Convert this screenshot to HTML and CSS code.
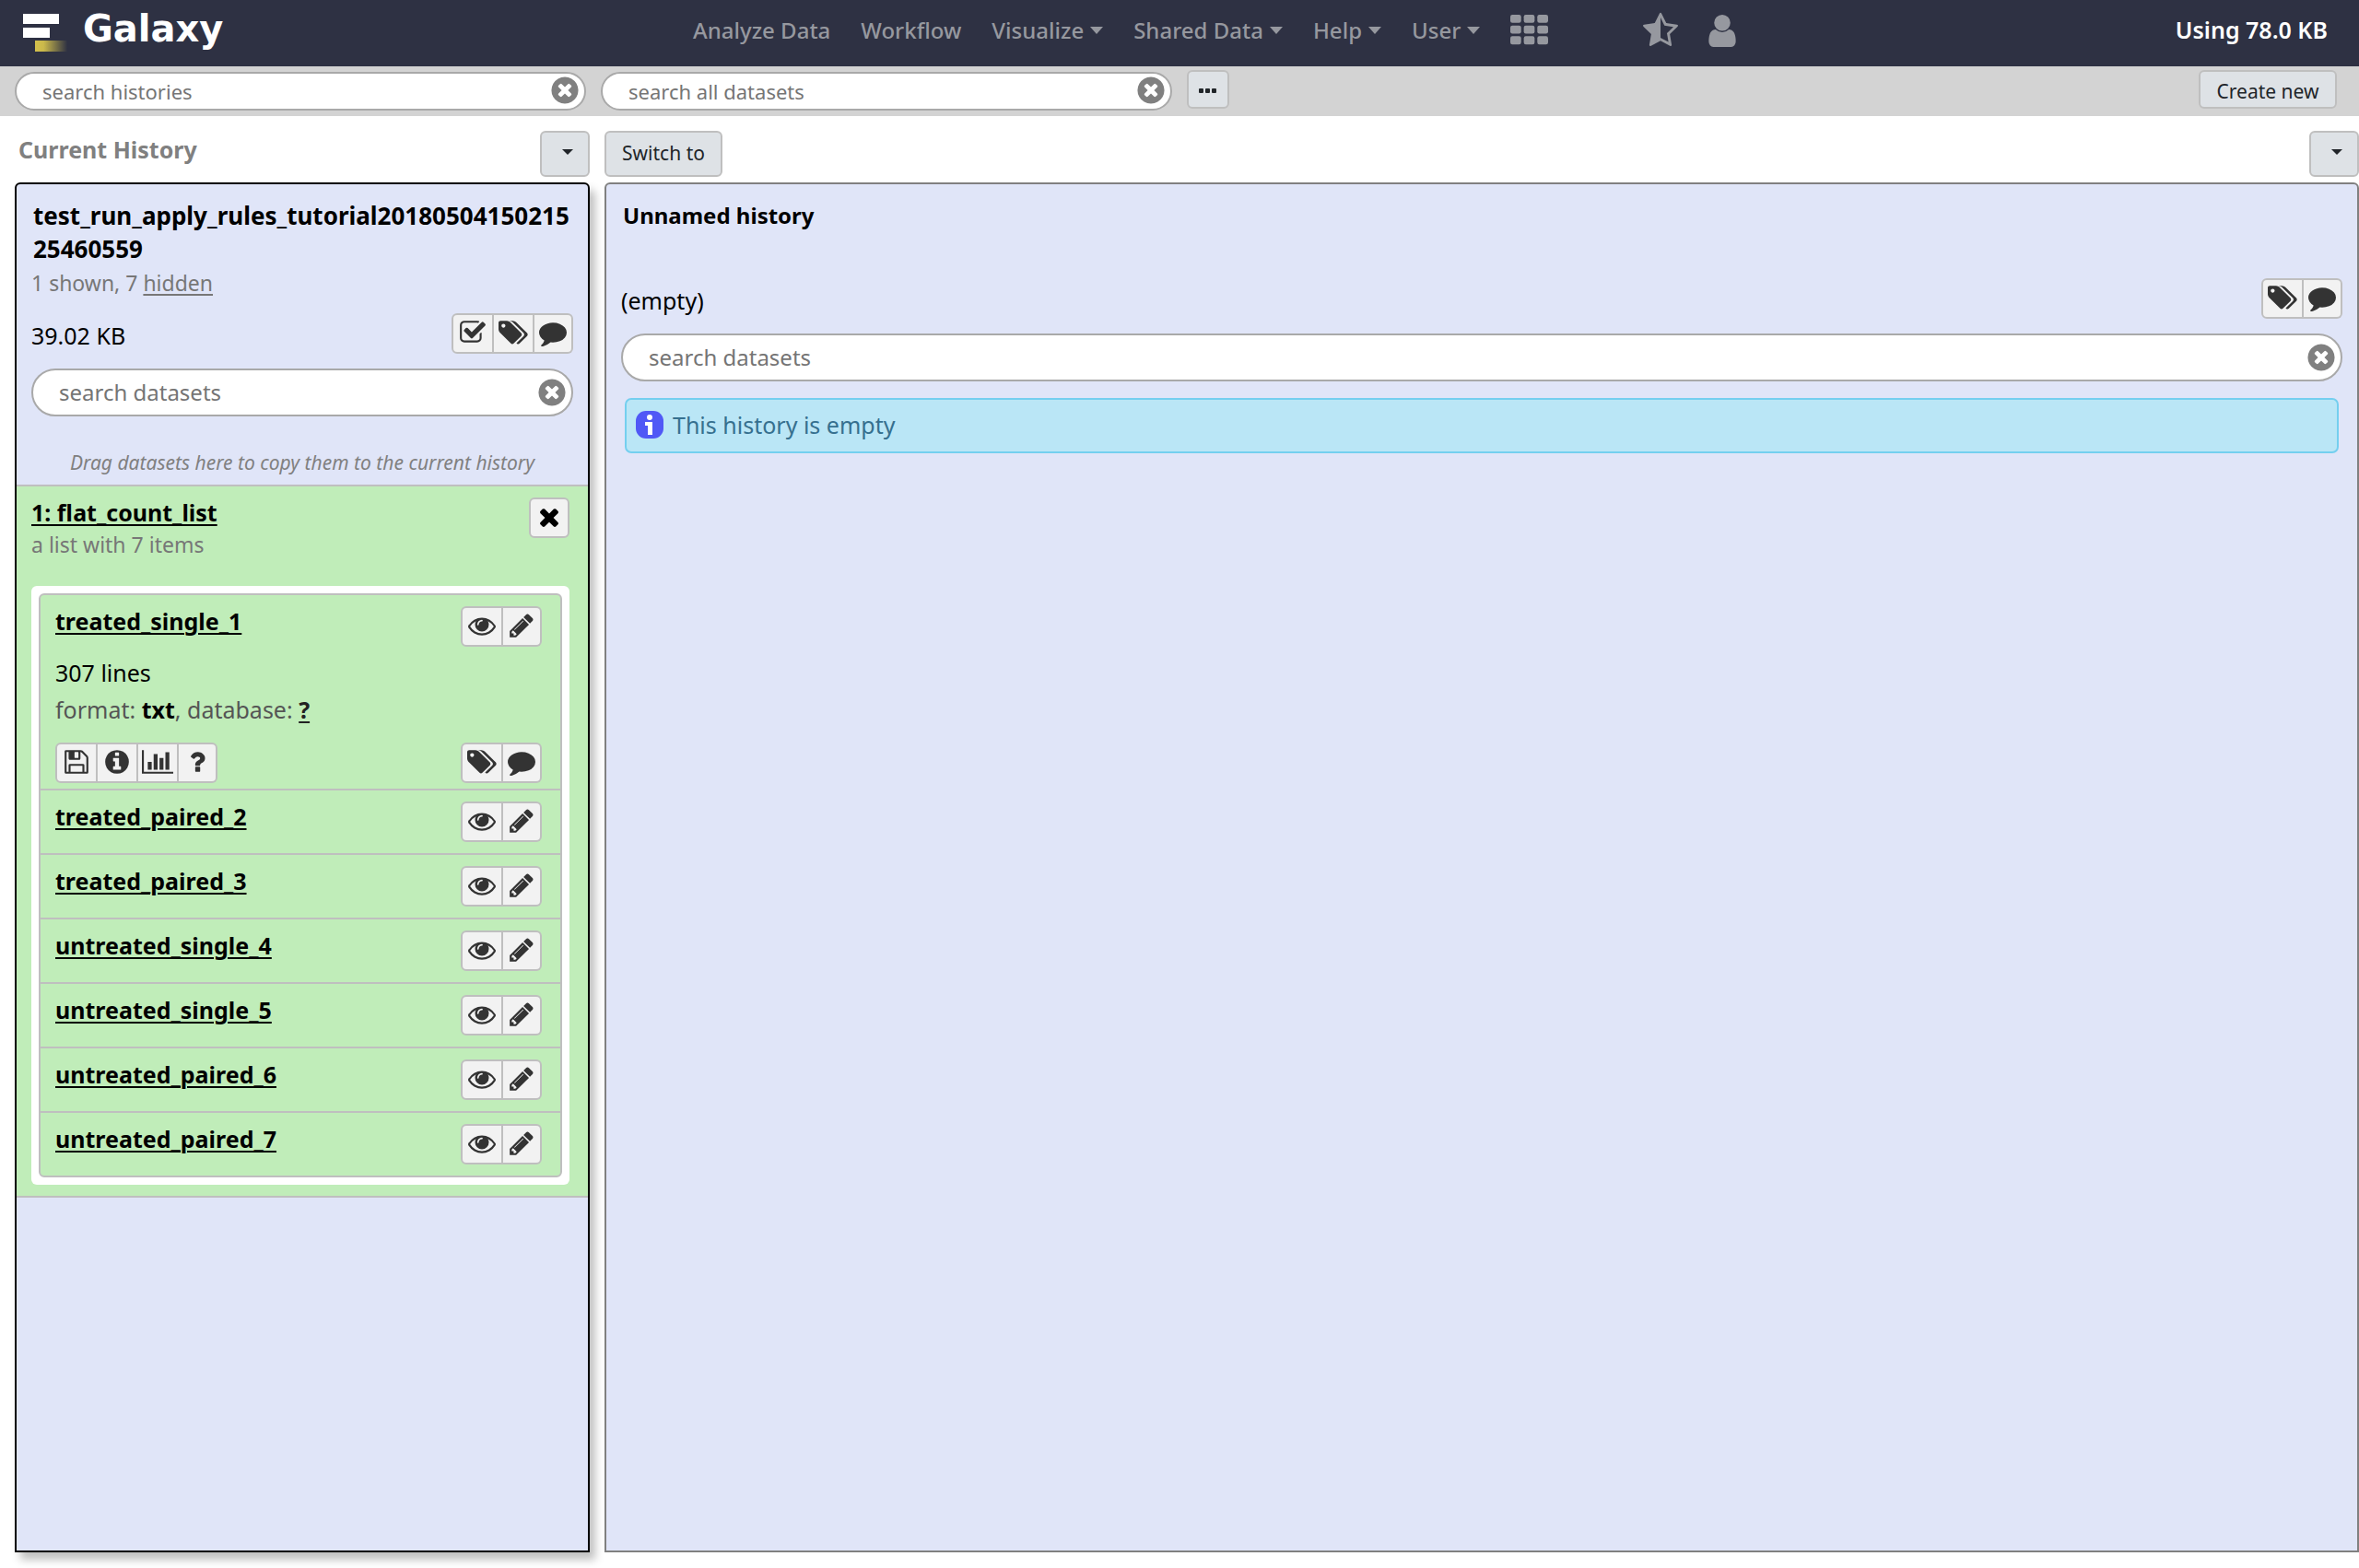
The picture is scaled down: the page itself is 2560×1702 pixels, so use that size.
FILE: index.html
```html
<!DOCTYPE html>
<html lang="en">
<head>
<meta charset="utf-8">
<title>Galaxy</title>
<link rel="stylesheet" href="styles.css">
</head>
<body>
<svg class="sprite" aria-hidden="true">
  <symbol id="eye" viewBox="0 0 1792 1792"><path d="M1664 960q-152-236-381-353 61 104 61 225 0 185-131.500 316.500t-316.500 131.500-316.500-131.500-131.500-316.500q0-121 61-225-229 117-381 353 133 205 333.500 326.500t434.500 121.500 434.500-121.500 333.500-326.500zm-720-384q0-20-14-34t-34-14q-125 0-214.500 89.500t-89.500 214.500q0 20 14 34t34 14 34-14 14-34q0-86 61-147t147-61q20 0 34-14t14-34zm848 384q0 34-20 69-140 230-376.500 368.500t-499.500 138.500-499.500-139-376.500-368q-20-35-20-69t20-69q140-229 376.500-368t499.500-139 499.500 139 376.500 368q20 35 20 69z"/></symbol>
  <symbol id="pencil" viewBox="0 0 1792 1792"><path d="M491 1536l91-91-235-235-91 91v107h128v128h107zm523-928q0-22-22-22-10 0-17 7l-542 542q-7 7-7 17 0 22 22 22 10 0 17-7l542-542q7-7 7-17zm-54-192l416 416-832 832h-416v-416zm683 96q0 53-37 90l-166 166-416-416 166-165q36-38 90-38 53 0 91 38l235 234q37 39 37 91z"/></symbol>
  <symbol id="tags" viewBox="0 0 1920 1792"><path d="M448 448q0-53-37.500-90.500t-90.500-37.500-90.500 37.500-37.500 90.500 37.500 90.500 90.500 37.500 90.500-37.500 37.500-90.500zm1067 576q0 53-37 90l-491 492q-39 37-91 37-53 0-90-37l-715-716q-38-37-64.500-101t-26.500-117v-416q0-52 38-90t90-38h416q53 0 117 26.500t102 64.500l715 714q37 39 37 91zm384 0q0 53-37 90l-491 492q-39 37-91 37-36 0-59-14t-53-45l470-470q37-37 37-90 0-52-37-91l-715-714q-38-38-102-64.500t-117-26.500h224q53 0 117 26.500t102 64.500l715 714q37 39 37 91z"/></symbol>
  <symbol id="comment" viewBox="0 0 1792 1792"><path d="M1792 896q0 174-120 321.500t-326 233-450 85.500q-70 0-145-8-198 175-460 242-49 14-114 22-17 2-30.500-9t-17.500-29v-1q-3-4-.5-12t2-10 4.500-9.500l6-9 7-8.500 8-9q7-8 31-34.500t34.500-38 31-39.500 32.500-51 27-59 26-76q-157-89-247.500-220t-90.500-281q0-130 71-248.500t191-204.500 286-136.500 348-50.500q244 0 450 85.500t326 233 120 321.500z"/></symbol>
  <symbol id="check" viewBox="0 0 1792 1792"><path d="M1472 930v318q0 119-84.500 203.500t-203.500 84.500h-832q-119 0-203.500-84.500t-84.500-203.500v-832q0-119 84.500-203.500t203.500-84.500h832q63 0 117 25 15 7 18 23 3 17-9 29l-49 49q-10 10-23 10-3 0-9-2-23-6-45-6h-832q-66 0-113 47t-47 113v832q0 66 47 113t113 47h832q66 0 113-47t47-113v-254q0-13 9-22l64-64q10-10 23-10 6 0 12 3 20 8 20 29zm231-489l-814 814q-24 24-57 24t-57-24l-430-430q-24-24-24-57t24-57l110-110q24-24 57-24t57 24l263 263 647-647q24-24 57-24t57 24l110 110q24 24 24 57t-24 57z"/></symbol>
  <symbol id="clear" viewBox="0 0 1792 1792"><path d="M1277 1122q0-26-19-45l-181-181 181-181q19-19 19-45 0-27-19-46l-90-90q-19-19-46-19-26 0-45 19l-181 181-181-181q-19-19-45-19-27 0-46 19l-90 90q-19 19-19 46 0 26 19 45l181 181-181 181q-19 19-19 45 0 27 19 46l90 90q19 19 46 19 26 0 45-19l181-181 181 181q19 19 45 19 27 0 46-19l90-90q19-19 19-46zm387-226q0 209-103 385.500t-279.500 279.500-385.500 103-385.500-103-279.500-279.500-103-385.500 103-385.500 279.500-279.500 385.500-103 385.500 103 279.500 279.500 103 385.500z"/></symbol>
  <symbol id="times" viewBox="0 0 1792 1792"><path d="M1490 1322q0 40-28 68l-136 136q-28 28-68 28t-68-28l-294-294-294 294q-28 28-68 28t-68-28l-136-136q-28-28-28-68t28-68l294-294-294-294q-28-28-28-68t28-68l136-136q28-28 68-28t68 28l294 294 294-294q28-28 68-28t68 28l136 136q28 28 28 68t-28 68l-294 294 294 294q28 28 28 68z"/></symbol>
  <symbol id="save" viewBox="0 0 1792 1792"><path d="M512 1536h768v-384h-768v384zm896 0h128v-896q0-14-10-38.500t-20-34.500l-281-281q-10-10-34-20t-39-10v416q0 40-28 68t-68 28h-576q-40 0-68-28t-28-68v-416h-128v1280h128v-416q0-40 28-68t68-28h832q40 0 68 28t28 68v416zm-384-928v-320q0-13-9.500-22.500t-22.500-9.500h-192q-13 0-22.500 9.500t-9.500 22.500v320q0 13 9.500 22.500t22.500 9.500h192q13 0 22.500-9.500t9.500-22.500zm640 32v928q0 40-28 68t-68 28h-1344q-40 0-68-28t-28-68v-1344q0-40 28-68t68-28h928q40 0 88 20t76 48l280 280q28 28 48 76t20 88z"/></symbol>
  <symbol id="info" viewBox="0 0 1792 1792"><path d="M1152 1376v-160q0-14-9-23t-23-9h-96v-512q0-14-9-23t-23-9h-320q-14 0-23 9t-9 23v160q0 14 9 23t23 9h96v320h-96q-14 0-23 9t-9 23v160q0 14 9 23t23 9h448q14 0 23-9t9-23zm-128-896v-160q0-14-9-23t-23-9h-192q-14 0-23 9t-9 23v160q0 14 9 23t23 9h192q14 0 23-9t9-23zm640 416q0 209-103 385.500t-279.500 279.500-385.500 103-385.500-103-279.500-279.500-103-385.500 103-385.500 279.500-279.500 385.500-103 385.500 103 279.500 279.500 103 385.500z"/></symbol>
  <symbol id="chart" viewBox="0 0 2048 1792"><path d="M640 896v512h-256v-512h256zm384-512v1024h-256v-1024h256zm1024 1152v128h-2048v-1536h128v1408h1920zm-640-896v768h-256v-768h256zm384-384v1152h-256v-1152h256z"/></symbol>
  <symbol id="question" viewBox="0 0 1792 1792"><path d="M1088 1256v240q0 16-12 28t-28 12h-240q-16 0-28-12t-12-28v-240q0-16 12-28t28-12h240q16 0 28 12t12 28zm316-600q0 54-15.500 101t-35 76.500-55 59.500-57.500 43.500-61 35.500q-41 23-68.500 65t-27.500 67q0 17-12 32.500t-28 15.500h-240q-15 0-25.500-18.500t-10.500-37.500v-45q0-83 65-156.500t143-108.500q59-27 84-56t25-76q0-42-46.500-74t-107.500-32q-65 0-108 29-35 25-107 115-13 16-31 16-12 0-25-8l-164-125q-13-10-15.500-25t5.500-28q160-266 464-266 80 0 161 31t146 83 106 127.500 41 158.500z"/></symbol>
  <symbol id="grid" viewBox="0 0 1792 1792"><g><rect y="128" width="512" height="384" rx="96"/><rect x="640" y="128" width="512" height="384" rx="96"/><rect x="1280" y="128" width="512" height="384" rx="96"/><rect y="640" width="512" height="384" rx="96"/><rect x="640" y="640" width="512" height="384" rx="96"/><rect x="1280" y="640" width="512" height="384" rx="96"/><rect y="1152" width="512" height="384" rx="96"/><rect x="640" y="1152" width="512" height="384" rx="96"/><rect x="1280" y="1152" width="512" height="384" rx="96"/></g></symbol>
  <symbol id="star" viewBox="64 0 1664 1792"><path d="M1250 957l257-250-356-52-66-10-30-60-159-322v963l59 31 318 168-60-355-12-66zm452-262l-363 354 86 500q5 33-6 51.500t-34 18.500q-17 0-40-12l-449-236-449 236q-23 12-40 12-23 0-34-18.500t-6-51.500l86-500-364-354q-32-32-23-59.500t54-34.500l502-73 225-455q20-41 49-41 28 0 49 41l225 455 502 73q45 7 54 34.500t-24 59.500z"/></symbol>
  <symbol id="user" viewBox="256 0 1280 1792"><path d="M1536 1399q0 109-62.500 187t-150.500 78h-854q-88 0-150.500-78t-62.500-187q0-85 8.500-160.500t31.500-152 58.500-131 94-89 134.500-34.500q131 128 313 128t313-128q76 0 134.500 34.500t94 89 58.500 131 31.500 152 8.500 160.500zm-256-887q0 159-112.500 271.500t-271.500 112.500-271.500-112.500-112.500-271.500 112.500-271.500 271.500-112.500 271.500 112.500 112.500 271.500z"/></symbol>
</svg>

<header class="masthead">
  <a class="brand" href="#">
    <svg class="logo" viewBox="0 0 52 44" aria-hidden="true">
      <defs><linearGradient id="fade"><stop offset="0" stop-color="#d3c04c"/><stop offset=".25" stop-color="#cbb94b"/><stop offset=".95" stop-color="#cbb94b" stop-opacity="0"/></linearGradient></defs>
      <rect x="1" y="1" width="39" height="11" fill="#fff"/>
      <rect x="1" y="16" width="29" height="11" fill="#fff"/>
      <rect x="14" y="30" width="37" height="12" fill="url(#fade)"/>
    </svg>
    <span>Galaxy</span>
  </a>
  <nav class="nav">
    <a href="#">Analyze Data</a>
    <a href="#">Workflow</a>
    <a class="menu" href="#">Visualize</a>
    <a class="menu" href="#">Shared Data</a>
    <a class="menu" href="#">Help</a>
    <a class="menu" href="#">User</a>
    <a href="#" aria-label="Apps"><svg class="nav-icon"><use href="#grid"/></svg></a>
    <a class="nav-extra" href="#" aria-label="Favorites"><svg class="nav-icon star"><use href="#star"/></svg></a>
    <a href="#" aria-label="Account"><svg class="nav-icon user"><use href="#user"/></svg></a>
  </nav>
  <span class="quota">Using 78.0 KB</span>
</header>

<div class="toolbar">
  <div class="search">
    <input type="text" placeholder="search histories" aria-label="search histories">
    <button class="clear" aria-label="Clear"><svg><use href="#clear"/></svg></button>
  </div>
  <div class="search">
    <input type="text" placeholder="search all datasets" aria-label="search all datasets">
    <button class="clear" aria-label="Clear"><svg><use href="#clear"/></svg></button>
  </div>
  <button class="btn more" aria-label="More options"><svg viewBox="0 0 20 6"><rect y="0" width="5" height="5" rx="1"/><rect x="7" width="5" height="5" rx="1"/><rect x="14" width="5" height="5" rx="1"/></svg></button>
  <button class="btn create">Create new</button>
</div>

<main class="columns">
  <section class="column">
    <div class="column-head">
      <strong class="column-label">Current History</strong>
      <button class="btn drop" aria-label="History options"></button>
    </div>
    <div class="panel current">
      <div class="controls">
        <h2 class="title">test_run_apply_rules_tutorial20180504150215<wbr>25460559</h2>
        <p class="subtitle">1 shown, 7 <a href="#">hidden</a></p>
        <div class="size-row">
          <span class="size">39.02 KB</span>
          <div class="icons">
            <button aria-label="Select datasets"><svg><use href="#check"/></svg></button>
            <button aria-label="Tags"><svg class="tags"><use href="#tags"/></svg></button>
            <button aria-label="Annotation"><svg><use href="#comment"/></svg></button>
          </div>
        </div>
        <div class="search">
          <input type="text" placeholder="search datasets" aria-label="search datasets">
          <button class="clear" aria-label="Clear"><svg><use href="#clear"/></svg></button>
        </div>
      </div>
      <p class="drag-hint">Drag datasets here to copy them to the current history</p>
      <article class="dataset">
        <div class="dataset-head">
          <div>
            <a class="name" href="#">1: flat_count_list</a>
            <p class="subtitle">a list with 7 items</p>
          </div>
          <div class="icons single"><button aria-label="Delete"><svg><use href="#times"/></svg></button></div>
        </div>
        <div class="frame">
          <ul class="items">
            <li class="open">
              <div class="item-row">
                <a class="name" href="#">treated_single_1</a>
                <div class="icons"><button aria-label="View"><svg><use href="#eye"/></svg></button><button aria-label="Edit"><svg><use href="#pencil"/></svg></button></div>
              </div>
              <p class="detail first">307 lines</p>
              <p class="detail">format: <b>txt</b>, database: <a href="#">?</a></p>
              <div class="item-row actions">
                <div class="icons">
                  <button aria-label="Download"><svg><use href="#save"/></svg></button>
                  <button aria-label="Details"><svg><use href="#info"/></svg></button>
                  <button aria-label="Visualize"><svg class="chart"><use href="#chart"/></svg></button>
                  <button aria-label="Help"><svg><use href="#question"/></svg></button>
                </div>
                <div class="icons">
                  <button aria-label="Tags"><svg class="tags"><use href="#tags"/></svg></button>
                  <button aria-label="Annotation"><svg><use href="#comment"/></svg></button>
                </div>
              </div>
            </li>
            <li class="item-row"><a class="name" href="#">treated_paired_2</a><div class="icons"><button aria-label="View"><svg><use href="#eye"/></svg></button><button aria-label="Edit"><svg><use href="#pencil"/></svg></button></div></li>
            <li class="item-row"><a class="name" href="#">treated_paired_3</a><div class="icons"><button aria-label="View"><svg><use href="#eye"/></svg></button><button aria-label="Edit"><svg><use href="#pencil"/></svg></button></div></li>
            <li class="item-row"><a class="name" href="#">untreated_single_4</a><div class="icons"><button aria-label="View"><svg><use href="#eye"/></svg></button><button aria-label="Edit"><svg><use href="#pencil"/></svg></button></div></li>
            <li class="item-row"><a class="name" href="#">untreated_single_5</a><div class="icons"><button aria-label="View"><svg><use href="#eye"/></svg></button><button aria-label="Edit"><svg><use href="#pencil"/></svg></button></div></li>
            <li class="item-row"><a class="name" href="#">untreated_paired_6</a><div class="icons"><button aria-label="View"><svg><use href="#eye"/></svg></button><button aria-label="Edit"><svg><use href="#pencil"/></svg></button></div></li>
            <li class="item-row"><a class="name" href="#">untreated_paired_7</a><div class="icons"><button aria-label="View"><svg><use href="#eye"/></svg></button><button aria-label="Edit"><svg><use href="#pencil"/></svg></button></div></li>
          </ul>
        </div>
      </article>
    </div>
  </section>

  <section class="column">
    <div class="column-head">
      <button class="btn switch">Switch to</button>
      <button class="btn drop" aria-label="History options"></button>
    </div>
    <div class="panel">
      <div class="controls">
        <h2 class="title">Unnamed history</h2>
        <div class="size-row no-subtitle">
          <span class="size">(empty)</span>
          <div class="icons">
            <button aria-label="Tags"><svg class="tags"><use href="#tags"/></svg></button>
            <button aria-label="Annotation"><svg><use href="#comment"/></svg></button>
          </div>
        </div>
        <div class="search">
          <input type="text" placeholder="search datasets" aria-label="search datasets">
          <button class="clear" aria-label="Clear"><svg><use href="#clear"/></svg></button>
        </div>
        <div class="message">
          <svg viewBox="0 0 30 30" aria-hidden="true"><rect width="30" height="30" rx="11" fill="#5058f6"/><circle cx="15" cy="7" r="3" fill="#fff"/><path d="M10 12h8v14h-5V16h-3z" fill="#fff"/></svg>
          <span>This history is empty</span>
        </div>
      </div>
    </div>
  </section>
</main>
</body>
</html>
```
FILE: styles.css
```css
* { box-sizing: border-box; }

body {
  margin: 0;
  min-height: 100vh;
  display: flex;
  flex-direction: column;
  background: #fff;
  color: #000;
  font: 25px/32px "Noto Sans", "Open Sans", sans-serif;
}

h2, p, ul { margin: 0; padding: 0; }
a { color: inherit; }
button, input { font: inherit; color: inherit; margin: 0; }
button { padding: 0; cursor: pointer; }
svg { display: block; fill: currentColor; }
.sprite { display: none; }

/* masthead */
.masthead {
  display: flex;
  height: 72px;
  background: #2e3143;
}
.brand {
  display: flex;
  flex: 0 0 752px;
  gap: 14px;
  padding: 14px 0 0 24px;
  color: #fff;
  font: bold 40px/34px "DejaVu Sans", sans-serif;
  text-decoration: none;
}
.logo { width: 52px; height: 44px; }
.nav {
  display: flex;
  flex: 1;
  align-items: center;
  gap: 33px;
  padding-bottom: 6px;
  color: #96989f;
  font-size: 24px;
  font-weight: 500;
}
.nav a { text-decoration: none; white-space: nowrap; }
.menu { display: flex; align-items: center; }
.menu::after {
  content: "";
  margin-left: 7px;
  border: 7px solid transparent;
  border-top: 8px solid currentColor;
  border-bottom: 0;
}
.nav-icon { width: 41px; height: 41px; }
.nav-icon.star { width: 38px; }
.nav-icon.user { width: 30px; }
.nav-extra { margin-left: 70px; }
.quota {
  padding: 16px 34px 0 0;
  color: #fff;
  font-weight: 600;
}

/* search fields */
.search { position: relative; }
.search input {
  display: block;
  width: 100%;
  height: 52px;
  padding: 0 44px 2px 28px;
  border: 2px solid #a9a9a9;
  border-radius: 26px;
  background: #fff;
}
.search input::placeholder { color: #757575; opacity: 1; }
.controls .search input { font-size: 24px; }
.clear {
  position: absolute;
  top: 0;
  bottom: 0;
  right: 6px;
  border: 0;
  background: none;
  color: #808080;
}
.clear svg { width: 34px; height: 34px; }

/* toolbar */
.toolbar {
  display: flex;
  gap: 16px;
  height: 54px;
  padding: 4px 24px 0 16px;
  background: #d3d3d3;
  font-size: 22px;
}
.toolbar .search { flex: 0 0 620px; padding-top: 2px; }
.toolbar .search input { height: 42px; padding-bottom: 0; }
.toolbar .clear { bottom: 6px; }
.btn {
  border: 2px solid #bfbfbf;
  border-radius: 6px;
  background: #dee2e6;
  color: #212529;
}
.more {
  display: flex;
  align-items: center;
  justify-content: center;
  width: 46px;
  height: 42px;
  padding-top: 4px;
}
.more svg { width: 20px; height: 6px; }
.create {
  width: 150px;
  height: 42px;
  margin-left: auto;
  padding-top: 4px;
  font-size: 21px;
}

/* history columns */
.columns {
  display: grid;
  flex: 1;
  grid-template-columns: 624px 1fr;
  gap: 16px;
  padding: 16px 0 17px 16px;
}
.column { display: flex; flex-direction: column; gap: 6px; }
.column-head { display: flex; justify-content: space-between; height: 50px; }
.column-label { padding: 4px; color: #808080; }
.drop {
  display: flex;
  align-items: center;
  justify-content: center;
  width: 54px;
  padding: 0 0 4px 6px;
}
.drop::after {
  content: "";
  border: 6px solid transparent;
  border-top-color: #212529;
  border-bottom: 0;
}
.switch { width: 128px; padding-bottom: 2px; font-size: 21px; }

.panel {
  flex: 1;
  border: 2px solid #808080;
  border-radius: 6px 6px 0 0;
  background: #e0e5f8;
}
.panel.current {
  border-color: #000;
  box-shadow: 6px 8px 10px rgba(0, 0, 0, .25);
}
.controls { padding: 16px 16px 0; }
.title {
  padding-left: 2px;
  font-size: 24px;
  line-height: 36px;
}
.current .title { font-size: 26px; }
.subtitle {
  margin-top: 4px;
  color: #777;
  font-size: 23px;
  line-height: 30px;
}
.subtitle a, .name, .detail a {
  text-decoration: underline;
  text-decoration-thickness: 2px;
  text-underline-offset: 3px;
}
.size-row {
  display: flex;
  align-items: center;
  justify-content: space-between;
  margin: 18px 0 16px;
}
.size-row.no-subtitle { margin-top: 50px; }
.size { padding-top: 4px; }
.drag-hint {
  margin: 36px 0 10px;
  color: #808080;
  font-size: 21px;
  font-style: italic;
  line-height: 28px;
  text-align: center;
}

/* icon button groups */
.icons { display: flex; height: 44px; }
.icons button {
  display: flex;
  align-items: center;
  justify-content: center;
  width: 44px;
  padding-bottom: 2px;
  border: 2px solid #bfbfbf;
  border-left: 0;
  background: #f2f2f2;
  color: #333;
}
.icons button:first-child {
  width: 46px;
  border-left: 2px solid #bfbfbf;
  border-radius: 6px 0 0 6px;
}
.icons button:last-child { width: 42px; border-radius: 0 6px 6px 0; }
.icons.single button { width: 44px; border-radius: 6px; color: #000; }
.icons svg { flex: none; width: 30px; height: 30px; }
.icons .tags { width: 32px; }
.icons .chart { width: 34px; }

/* datasets */
.dataset {
  padding: 12px 20px 12px 16px;
  border: solid #bfbfbf;
  border-width: 2px 0;
  background: #c0edb9;
}
.dataset-head { display: flex; justify-content: space-between; height: 96px; }
.name { font-weight: 700; }
.frame { padding: 8px; border-radius: 6px; background: #fff; }
.items {
  border: 2px solid #bfbfbf;
  border-radius: 6px;
  background: #c0edb9;
  list-style: none;
}
.item-row { display: flex; justify-content: space-between; }
.items > li { padding: 12px 20px 12px 16px; }
.items > li + li { border-top: 2px solid #bfbfbf; }
.items > .open { padding-bottom: 6px; }
.detail { color: #555; line-height: 40px; }
.detail.first { margin-top: 8px; color: #000; }
.detail b { color: #000; }
.detail a { color: #222; font-weight: 700; }
.actions { margin-top: 16px; }

/* info message */
.message {
  display: flex;
  align-items: center;
  gap: 10px;
  height: 60px;
  margin: 18px 4px 0;
  padding: 0 10px 2px;
  border: 2px solid #74cfef;
  border-radius: 7px;
  background: #bae6f6;
  color: #36708f;
}
.message svg { width: 30px; height: 30px; }
```
